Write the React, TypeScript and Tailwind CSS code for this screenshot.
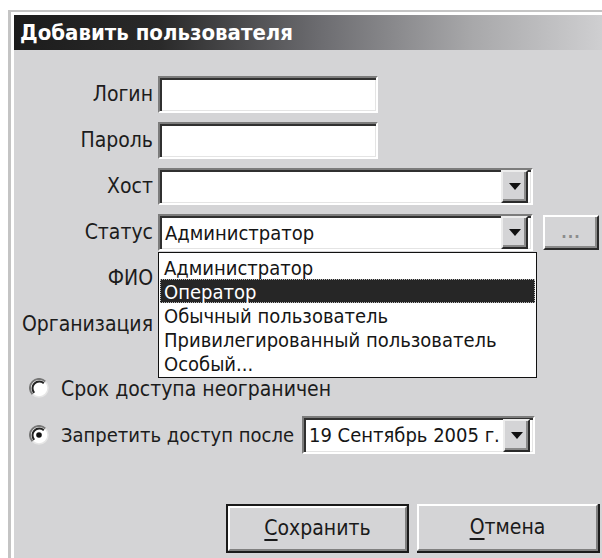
import React from "react";

const font = {
  fontFamily: '"DejaVu Sans Condensed", "DejaVu Sans", Tahoma, sans-serif',
};

function Sunken({
  className = "",
  children,
}: {
  className?: string;
  children?: React.ReactNode;
}) {
  return (
    <div
      className={`border-t-2 border-l-2 border-t-[#7c7c7c] border-l-[#7c7c7c] border-b-2 border-r-2 border-b-white border-r-white ${className}`}
    >
      <div className="h-full w-full bg-white shadow-[inset_2px_2px_0_#303030,inset_-1px_-1px_0_#e4e4e4] flex items-center">
        {children}
      </div>
    </div>
  );
}

function ArrowButton() {
  return (
    <div className="h-[33px] w-[27px] bg-[#d4d4d6] border-t-2 border-l-2 border-t-[#ececec] border-l-[#ececec] border-b-2 border-r-2 border-b-[#2a2a2a] border-r-[#2a2a2a] shadow-[inset_-2px_-2px_0_#8a8a8a] flex items-center justify-center mr-[3px]">
      <svg width="12" height="7" viewBox="0 0 12 7">
        <path d="M0 0H12L6 7Z" fill="#111" />
      </svg>
    </div>
  );
}

function Combo({
  className = "",
  value,
}: {
  className?: string;
  value?: string;
}) {
  return (
    <Sunken className={className}>
      <span className="flex-1 pl-[5px] text-[20px] text-[#151515] leading-none whitespace-nowrap">
        {value}
      </span>
      <ArrowButton />
    </Sunken>
  );
}

function Label({ children }: { children: React.ReactNode }) {
  return (
    <div className="text-right pr-[5px] text-[21px] text-[#1c1c1c] leading-none">
      {children}
    </div>
  );
}

function Radio({ checked }: { checked?: boolean }) {
  return (
    <svg width="20" height="20" viewBox="0 0 20 20" className="shrink-0">
      <circle cx="10" cy="10" r="9" fill="#fff" />
      <path
        d="M3.6 16.4A9 9 0 0 1 16.4 3.6"
        stroke="#777"
        strokeWidth="2"
        fill="none"
      />
      <path
        d="M5.2 14.8A6.8 6.8 0 0 1 14.8 5.2"
        stroke="#222"
        strokeWidth="2"
        fill="none"
      />
      <path
        d="M16.4 3.6A9 9 0 0 1 3.6 16.4"
        stroke="#e6e6e6"
        strokeWidth="1.5"
        fill="none"
      />
      {checked && <circle cx="10" cy="10" r="2.8" fill="#111" />}
    </svg>
  );
}

function Button({
  first,
  rest,
  isDefault,
}: {
  first: string;
  rest: string;
  isDefault?: boolean;
}) {
  return (
    <div
      className={`h-[49px] w-[183px] ${
        isDefault ? "border-2 border-[#1a1a1a]" : "border-r-2 border-b-2 border-[#1a1a1a]"
      }`}
    >
      <div className="h-full w-full bg-[#d4d4d6] border-t-2 border-l-2 border-t-white border-l-white border-b-2 border-r-2 border-b-[#808080] border-r-[#808080] flex items-center justify-center text-[21px] text-[#1a1a1a] leading-none">
        <span>
          <span className="underline underline-offset-[4px]">{first}</span>
          {rest}
        </span>
      </div>
    </div>
  );
}

const options = [
  "Администратор",
  "Оператор",
  "Обычный пользователь",
  "Привилегированный пользователь",
  "Особый...",
];

export default function App() {
  return (
    <div
      className="w-[602px] h-[558px] bg-white overflow-hidden pt-[10px] pl-[8px]"
      style={font}
    >
      <div className="h-full flex flex-col border-t-2 border-l-[3px] border-[#c4c4c4]">
        <div className="flex-1 flex flex-col border-t-[3px] border-l-[3px] border-white">
          {/* title bar */}
          <div className="h-[35px] shrink-0 flex items-center pl-[6px] bg-[linear-gradient(to_right,#1c1c1c_0%,#2a2a2a_25%,#6c6c70_52%,#a8a8aa_78%,#cfcfd1_100%)]">
            <span className="text-white font-bold text-[22px] leading-none">
              Добавить пользователя
            </span>
          </div>

          {/* body */}
          <div className="relative flex-1 bg-[#d4d4d6] pt-[26px]">
            <div className="grid grid-cols-[144px_auto] items-center gap-y-[9px]">
              <Label>Логин</Label>
              <Sunken className="h-[37px] w-[220px]" />
              <Label>Пароль</Label>
              <Sunken className="h-[37px] w-[220px]" />
              <Label>Хост</Label>
              <Combo className="h-[37px] w-[375px]" />
              <Label>Статус</Label>
              <div className="flex items-center gap-[10px]">
                <Combo className="h-[37px] w-[375px]" value="Администратор" />
                <div className="h-[35px] w-[56px] bg-[#d4d4d6] border-t-2 border-l-2 border-t-white border-l-white border-b-2 border-r-2 border-b-[#2a2a2a] border-r-[#2a2a2a] shadow-[inset_-2px_-2px_0_#8a8a8a] flex items-center justify-center text-[16px] font-bold tracking-[1px] text-[#8c8c8c] leading-none">
                  ...
                </div>
              </div>
              <Label>ФИО</Label>
              <Sunken className="h-[37px] w-[375px]" />
              <Label>Организация</Label>
              <Sunken className="h-[37px] w-[375px]" />
            </div>

            {/* access period */}
            <div className="mt-[30px] h-[30px] flex items-center pl-[15px] gap-[12px] text-[21px] text-[#1c1c1c]">
              <Radio />
              <span className="leading-[16px] pt-[1px]">Срок доступа неограничен</span>
            </div>
            <div className="mt-[13px] flex items-center pl-[15px] text-[20px] text-[#1c1c1c] leading-none">
              <Radio checked />
              <span className="ml-[12px] w-[241px] whitespace-nowrap">
                Запретить доступ после
              </span>
              <Combo className="h-[38px] w-[233px]" value="19 Сентябрь 2005 г." />
            </div>

            <div className="mt-[50px] pl-[212px] flex gap-[8px]">
              <Button first="С" rest="охранить" isDefault />
              <Button first="О" rest="тмена" />
            </div>

            {/* open status list */}
            <div className="absolute left-[144px] top-[202px] w-[379px] h-[126px] bg-white border-[1.5px] border-[#111] pt-[2px] px-[1px]">
              {options.map((o, i) => (
                <div
                  key={o}
                  className={`h-[24px] flex items-center pl-[4px] pt-[2px] text-[20px] leading-none whitespace-nowrap ${
                    i === 1
                      ? "bg-[#262626] text-white outline-1 outline-dotted outline-[#bbb] -outline-offset-1"
                      : "text-[#151515]"
                  }`}
                >
                  {o}
                </div>
              ))}
            </div>
          </div>
        </div>
      </div>
    </div>
  );
}
